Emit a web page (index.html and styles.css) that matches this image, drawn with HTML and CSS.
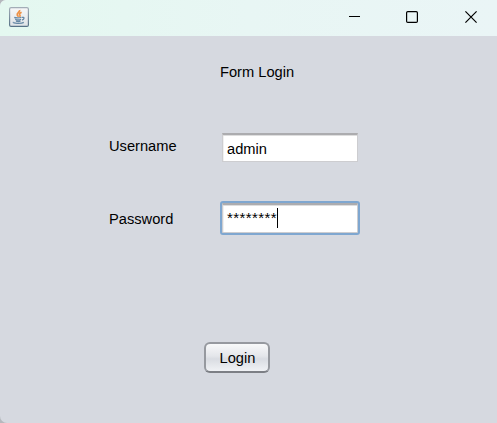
FILE: index.html
```html
<!DOCTYPE html>
<html lang="en">
<head>
<meta charset="utf-8">
<title>Form Login</title>
<link rel="stylesheet" href="styles.css">
</head>
<body>
<main class="window">
  <header class="titlebar">
    <svg class="app-icon" width="20" height="20" viewBox="0 0 20 20" fill="none">
      <defs><linearGradient id="tile" x1="0" y1="0" x2="0" y2="1"><stop offset="0" stop-color="#f7f7f8"/><stop offset="1" stop-color="#dfe3e7"/></linearGradient><linearGradient id="edge" x1="0" y1="0" x2="0" y2="1"><stop offset="0" stop-color="#a3adb7"/><stop offset="1" stop-color="#587287"/></linearGradient></defs>
      <rect x=".6" y=".6" width="18.8" height="18.8" rx="1.5" fill="url(#tile)" stroke="url(#edge)" stroke-width="1.2"/>
      <path d="M10.6 3C11.4 5 7.2 6 8.3 8.2L9.6 9.8M12.6 5.3C9.7 6.6 10.2 7.4 11 8.3C11.3 9 10.8 9.4 10.4 9.8" stroke="#ee9146" stroke-width="1.7"/>
      <path d="M5.3 10.4C6.5 11.2 11 11.1 12.5 10.3M6.2 12.3C7.8 13 10.6 13 12 12.3M7 14.1C8.5 14.7 10.2 14.6 11.5 14.1M13 10.4C15.7 9.8 15.5 12.3 13 13M4.5 15C3 16.5 12.5 17 14.8 15.4" stroke="#6688a5" stroke-width="1.3"/>
    </svg>
    <nav class="controls">
      <svg width="12" height="12" viewBox="0 0 12 12"><path d="M1 5.5H12" stroke="#000"/><path d="M11 5.5H12" stroke="#000"/></svg>
      <svg width="12" height="12" viewBox="0 0 12 12"><rect x=".6" y=".6" width="10.8" height="10.8" rx="1.2" fill="none" stroke="#000" stroke-width="1.2"/></svg>
      <svg width="12" height="12" viewBox="0 0 12 12"><path d="M.4.4 11.6 11.6M11.6.4.4 11.6" stroke="#000" stroke-width="1.2"/></svg>
    </nav>
  </header>
  <section class="form">
    <h1 class="title">Form Login</h1>
    <div class="row row-user">
      <span class="label">Username</span>
      <div class="field">admin</div>
    </div>
    <div class="row row-pass">
      <span class="label">Password</span>
      <div class="field focused"><span class="mask">********</span><i class="caret"></i></div>
    </div>
    <button class="login" type="button">Login</button>
  </section>
</main>
</body>
</html>
```
FILE: styles.css
```css
* { box-sizing: border-box; }
body {
  margin: 0;
  background: #b5b8bd;
  color: #000;
  font: 14.67px/18px "Liberation Sans", Arial, sans-serif;
}
.window {
  width: 497px;
  height: 423px;
  overflow: hidden;
  border-radius: 6px 0 0 7px;
  background: #d6d9e0;
}
.titlebar {
  display: flex;
  justify-content: space-between;
  height: 36px;
  padding: 7px 20px 0 9px;
  background: linear-gradient(90deg, #e4f8f0, #e8f6f4 50%, #eaf5f6);
}
.app-icon, .controls svg { display: block; }
.controls {
  display: flex;
  gap: 47px;
  padding-top: 4px;
}
.controls svg:first-child { margin-right: -1px; }
.form { padding-top: 27px; }
.title {
  margin: 0 0 0 220px;
  font-size: inherit;
  font-weight: normal;
  line-height: 18px;
}
.row {
  display: flex;
  margin-left: 109px;
}
.row-user { margin-top: 52px; }
.row-pass { margin-top: 41px; }
.label {
  width: 113px;
  padding-top: 4px;
}
.field {
  display: flex;
  width: 136px;
  height: 29px;
  padding: 5px 0 0 4px;
  border: 1px solid #cdcdd0;
  border-top: 2px solid #acacaf;
  background: #fff;
  box-shadow: inset 0 1px #dedede, inset 1px 0 #f0f0f0;
}
.focused {
  height: 30px;
  outline: 2px solid #7fa7d0;
  border-radius: 1px;
}
.row-pass .label { padding-top: 7px; }
.mask {
  margin-top: -1px;
  font-size: 15px;
  letter-spacing: .42px;
}
.caret {
  width: 1px;
  height: 20px;
  margin-top: -2px;
  background: #000;
}
.login {
  display: block;
  width: 66px;
  height: 31px;
  margin: 109px 0 0 204px;
  padding: 1px 0 0 1px;
  border: 2px solid #96999f;
  border-bottom-color: #7c7f85;
  border-radius: 6px;
  background: linear-gradient(#f8f9fa, #e4e6ea 45%, #d9dce2 55%, #f0f2f5);
  color: #000;
  font: inherit;
}
```
